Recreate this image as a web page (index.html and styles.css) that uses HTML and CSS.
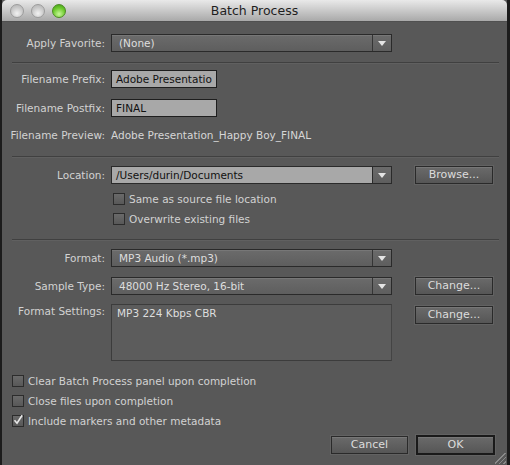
FILE: index.html
```html
<!DOCTYPE html>
<html>
<head>
<meta charset="utf-8">
<link rel="stylesheet" href="styles.css">
</head>
<body>
<div class="window">
  <div class="titlebar">
    <div class="lights">
      <span class="light"></span>
      <span class="light"></span>
      <span class="light green"></span>
    </div>
    <div class="title">Batch Process</div>
  </div>
  <div class="content">
    <div class="row r-fav">
      <label class="lbl">Apply Favorite:</label>
      <div class="select wide"><span class="sel-text">(None)</span><span class="sel-btn"><span class="arrow"></span></span></div>
    </div>
    <div class="sep s1"></div>
    <div class="row r-prefix">
      <label class="lbl">Filename Prefix:</label>
      <div class="field">Adobe Presentatio</div>
    </div>
    <div class="row r-postfix">
      <label class="lbl">Filename Postfix:</label>
      <div class="field">FINAL</div>
    </div>
    <div class="row r-preview">
      <label class="lbl">Filename Preview:</label>
      <span class="value">Adobe Presentation_Happy Boy_FINAL</span>
    </div>
    <div class="sep s2"></div>
    <div class="row r-loc">
      <label class="lbl">Location:</label>
      <div class="select wide combo"><span class="sel-text">/Users/durin/Documents</span><span class="sel-btn"><span class="arrow"></span></span></div>
      <button class="btn side">Browse...</button>
    </div>
    <div class="check indent c1"><span class="box"></span><span>Same as source file location</span></div>
    <div class="check indent c2"><span class="box"></span><span>Overwrite existing files</span></div>
    <div class="sep s3"></div>
    <div class="row r-format">
      <label class="lbl">Format:</label>
      <div class="select wide"><span class="sel-text">MP3 Audio (*.mp3)</span><span class="sel-btn"><span class="arrow"></span></span></div>
    </div>
    <div class="row r-sample">
      <label class="lbl">Sample Type:</label>
      <div class="select wide"><span class="sel-text">48000 Hz Stereo, 16-bit</span><span class="sel-btn"><span class="arrow"></span></span></div>
      <button class="btn side">Change...</button>
    </div>
    <div class="row r-settings">
      <label class="lbl top">Format Settings:</label>
      <div class="textarea">MP3 224 Kbps CBR</div>
      <button class="btn side top-btn">Change...</button>
    </div>
    <div class="check bottom b1"><span class="box"></span><span>Clear Batch Process panel upon completion</span></div>
    <div class="check bottom b2"><span class="box"></span><span>Close files upon completion</span></div>
    <div class="check bottom b3"><span class="box checked"><svg viewBox="0 0 12 12" width="12" height="12"><path d="M2.5 6.2 L5 9.2 L10.2 1.2" fill="none" stroke="#e8e8e8" stroke-width="1.6"/></svg></span><span>Include markers and other metadata</span></div>
    <div class="actions">
      <button class="btn cancel">Cancel</button>
      <button class="btn ok">OK</button>
    </div>
    <div class="grip"></div>
  </div>
</div>
</body>
</html>
```

FILE: styles.css
```css
html, body {
  margin: 0;
  padding: 0;
  background: #1c1c1c;
  width: 510px;
  height: 465px;
  overflow: hidden;
}
body {
  padding-left: 2px;
  font-family: "DejaVu Sans", "Liberation Sans", sans-serif;
  font-size: 10.5px;
  color: #d4d4d4;
}
.window {
  width: 505px;
  height: 465px;
  background: #585858;
  position: relative;
}
.titlebar {
  height: 22px;
  background: linear-gradient(#e9e9e9, #c9c9c9 50%, #a9a9a9);
  border-top-left-radius: 5px;
  border-top-right-radius: 5px;
  border-bottom: 1px solid #505050;
  box-sizing: border-box;
  display: flex;
  align-items: center;
  position: relative;
}
.lights {
  display: flex;
  gap: 7px;
  padding-left: 8px;
}
.light {
  width: 14px;
  height: 14px;
  border-radius: 50%;
  box-sizing: border-box;
  border: 1px solid #9c9c9c;
  background: radial-gradient(circle at 50% 70%, #f2f2f2, #c6c6c6 60%, #b3b3b3);
}
.light.green {
  border-color: #4c8b24;
  background: radial-gradient(circle at 50% 75%, #c8f79a, #6fcb2f 55%, #3f9a14);
}
.title {
  position: absolute;
  left: 0;
  right: 0;
  text-align: center;
  font-size: 12.5px;
  color: #1e1e1e;
  top: 3px;
}
.content {
  display: flex;
  flex-direction: column;
}
.row {
  display: flex;
  align-items: center;
}
.lbl {
  width: 103px;
  text-align: right;
  margin-right: 6px;
  white-space: nowrap;
  color: #d2d2d2;
}
.lbl.top {
  align-self: flex-start;
  margin-top: 1px;
}
.select {
  height: 18px;
  box-sizing: border-box;
  border: 1px solid #2a2a2a;
  background: linear-gradient(#6b6b6b, #5e5e5e);
  box-shadow: inset 0 1px 0 #777;
  display: flex;
  align-items: stretch;
  color: #dedede;
}
.select.wide { width: 281px; }
.sel-text {
  flex: 1;
  padding-left: 7px;
  line-height: 16px;
  white-space: nowrap;
  overflow: hidden;
}
.sel-btn {
  width: 18px;
  border-left: 1px solid #353535;
  display: flex;
  align-items: center;
  justify-content: center;
}
.combo {
  background: #5e5e5e;
  box-shadow: none;
}
.combo .sel-text {
  background: #a8a8a8;
  color: #111;
  padding-left: 4px;
  border-right: 1px solid #2a2a2a;
}
.combo .sel-btn {
  border-left: none;
  background: linear-gradient(#6b6b6b, #5e5e5e);
}
.arrow {
  width: 0;
  height: 0;
  border-left: 4px solid transparent;
  border-right: 4px solid transparent;
  border-top: 5px solid #e4e4e4;
}
.field {
  width: 106px;
  height: 18px;
  box-sizing: border-box;
  border: 1px solid #1e1e1e;
  background: #a8a8a8;
  color: #111;
  line-height: 16px;
  padding-left: 4px;
  white-space: nowrap;
  overflow: hidden;
}
.value { color: #d6d6d6; white-space: nowrap; }
.sep {
  height: 1px;
  background: #404040;
  margin-left: 10px;
  margin-right: 8px;
  box-shadow: 0 1px 0 #606060;
}
.btn {
  font-family: inherit;
  font-size: 11px;
  height: 18px;
  box-sizing: border-box;
  border: 1px solid #2a2a2a;
  background: linear-gradient(#6a6a6a, #565656);
  box-shadow: inset 0 1px 0 #777, 0 0 0 1px #626262;
  color: #dcdcdc;
  padding: 0;
  line-height: 16px;
  text-align: center;
}
.btn.side {
  width: 78px;
  margin-left: 23px;
}
.btn.top-btn {
  align-self: flex-start;
  margin-top: 2px;
}
.textarea {
  width: 281px;
  height: 57px;
  box-sizing: border-box;
  border: 1px solid #3c3c3c;
  border-right-color: #444;
  background: #5c5c5c;
  color: #dedede;
  padding: 2px 0 0 5px;
}
.check {
  display: flex;
  align-items: center;
  height: 14px;
  color: #d2d2d2;
  white-space: nowrap;
}
.check .box {
  width: 12px;
  height: 12px;
  box-sizing: border-box;
  border: 1px solid #2c2c2c;
  background: linear-gradient(#6a6a6a, #585858);
  margin-right: 4px;
  position: relative;
}
.check .box svg {
  position: absolute;
  left: -1px;
  top: -2px;
}
.indent { margin-left: 111px; }
.bottom { margin-left: 10px; }
.actions {
  display: flex;
  justify-content: flex-end;
  gap: 8px;
  padding-right: 12px;
  align-items: center;
}
.btn.cancel { width: 77px; }
.btn.ok {
  width: 79px;
  height: 20px;
  border: 2px solid #1a1a1a;
  line-height: 16px;
}
.grip {
  position: absolute;
  right: 1px;
  bottom: 1px;
  width: 11px;
  height: 11px;
  background: linear-gradient(135deg, transparent 45%, #8a8a8a 45%, #8a8a8a 52%, transparent 52%, transparent 65%, #8a8a8a 65%, #8a8a8a 72%, transparent 72%, transparent 85%, #8a8a8a 85%, #8a8a8a 92%, transparent 92%);
}

/* vertical rhythm */
.r-fav { margin-top: 12px; }
.s1 { margin-top: 10px; }
.r-prefix { margin-top: 7px; }
.r-postfix { margin-top: 11px; }
.r-preview { margin-top: 11px; height: 14px; }
.s2 { margin-top: 14px; }
.r-loc { margin-top: 9px; }
.c1 { margin-top: 8px; }
.c2 { margin-top: 6px; }
.s3 { margin-top: 13px; }
.r-format { margin-top: 9px; }
.r-sample { margin-top: 10px; }
.r-settings { margin-top: 9px; }
.b1 { margin-top: 13px; }
.b2 { margin-top: 6px; }
.b3 { margin-top: 6px; }
.actions { margin-top: 7px; }
```
